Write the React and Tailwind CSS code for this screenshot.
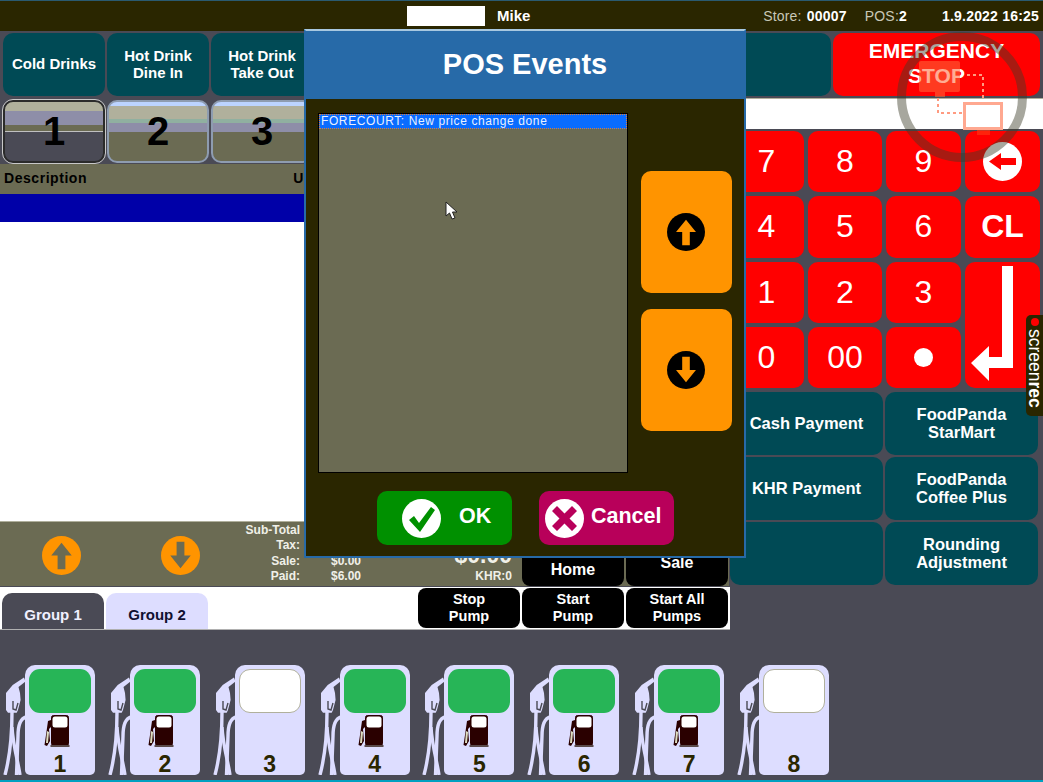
import React from "react";

const teal = "bg-[#004a55] text-white font-bold flex items-center justify-center text-center rounded-[10px]";
const topBtn = `${teal} w-[102px] h-[63px] text-[15px] leading-[17px] pb-[2px]`;
const payBtn = `${teal} text-[16.5px] leading-[18px] pb-[2px]`;

function Arrow({ dir = "up", size = 38, circle = "#000", arrow = "#ff9400" }) {
  const d =
    dir === "up"
      ? "M20 7 L30.5 20 L24 20 L24 34 L16 34 L16 20 L9.5 20 Z"
      : "M20 33 L30.5 20 L24 20 L24 6 L16 6 L16 20 L9.5 20 Z";
  return (
    <svg width={size} height={size} viewBox="0 0 40 40">
      <circle cx="20" cy="20" r="20" fill={circle} />
      <path d={d} fill={arrow} />
    </svg>
  );
}

function Tile({ n, active }) {
  return (
    <div
      className={`w-[102px] h-[63px] rounded-[10px] border-2 flex items-center justify-center overflow-hidden text-black font-bold text-[40px] leading-none pb-[2px] ${
        active
          ? "border-[#2b2b2b] outline outline-1 outline-[#c8c8c8] bg-[linear-gradient(#b0b09c_0,#b0b09c_9px,#8e8ea8_9px,#8e8ea8_23px,#6b6b53_23px,#6b6b53_29px,#c0c0c0_29px,#c0c0c0_30px,#4a4a55_30px)]"
          : "border-[#8e9cb0] bg-[linear-gradient(#bcd4ff_0,#bcd4ff_4px,#b0b09c_4px,#b0b09c_17px,#90b0a0_17px,#90b0a0_21px,#8e8ea8_21px,#8e8ea8_30px,#6b6b53_30px)]"
      }`}
    >
      {n}
    </div>
  );
}

function Pump({ n, on }) {
  return (
    <div className="relative w-[104.85px] shrink-0 h-[145px] flex justify-end pr-[9.85px] items-end">
      <svg className="absolute left-[3px] top-[46px]" width="24" height="99" viewBox="0 0 24 99">
        <path d="M21 1.5 L22.5 5.5 L15.5 11 L17 17 L17.6 24 L15 34 L13.7 36.7 L5 36.7 L3 34 L3 17 L9.7 9 Z" fill="#ddddff" />
        <path d="M10 25 L10 33 L13 34 L15 27" fill="none" stroke="#4a4a55" strokeWidth="1.4" />
        <path d="M9 36 C9 60 7 80 2 99" fill="none" stroke="#ddddff" strokeWidth="3.4" />
        <path d="M23 41 C16 43 15 52 15 60 L13.5 99" fill="none" stroke="#ddddff" strokeWidth="3.4" />
        <path d="M9 51 C10 70 15 85 17 99" fill="none" stroke="#ddddff" strokeWidth="3.4" />
      </svg>
      <div className="w-[70px] h-[110px] bg-[#ddddff] rounded-t-[10px] rounded-b-[5px] flex flex-col items-center pt-[4px]">
        <div className={`w-[62px] h-[44px] rounded-[11px] shrink-0 ${on ? "bg-[#27b557]" : "bg-white border border-[#b0b09c]"}`} />
        <div className="h-[34px] mt-[2px] w-[26px] mr-[7px] shrink-0">
          {on && (
            <svg width="26" height="33" viewBox="0 0 26 33">
              <rect x="7.5" y="0.5" width="17" height="30" rx="2" fill="#2a0000" stroke="#2a0000" />
              <rect x="8.5" y="1.5" width="15" height="11" rx="2.5" fill="#fff" />
              <rect x="6.5" y="30" width="19" height="2" fill="#5a4a4a" />
              <path d="M4 6 L7 5 L7 12 L5 14 L6 26 L3 31 L0.5 30 L2 20 L3 13 Z" fill="#2a0000" />
              <path d="M3 16 L5 17 L4 28 L2 28 Z" fill="#ddddc0" />
            </svg>
          )}
        </div>
        <div className="mt-[2px] text-[#2a2600] font-bold text-[23px] leading-[26px]">{n}</div>
      </div>
    </div>
  );
}

function Keypad() {
  const cell = "bg-[#ff0000] text-white flex items-center justify-center rounded-[10px] text-[32px] leading-none";
  return (
    <div className="grid grid-cols-[75px_74px_75px_75px] grid-rows-[61px_62px_61px_61px] gap-x-[4px] gap-y-[4px] mt-[2px]">
      {["7", "8", "9"].map((k) => <div key={k} className={`${cell} pb-[2px]`}>{k}</div>)}
      <div className={cell}>
        <svg width="39" height="39" viewBox="0 0 39 39">
          <circle cx="19.5" cy="19.5" r="19.5" fill="#fff" />
          <path d="M6 19.5 L18 11 L18 16 L33 16 L33 23 L18 23 L18 28 Z" fill="#ff0000" />
        </svg>
      </div>
      {["4", "5", "6"].map((k) => <div key={k} className={`${cell} pb-[2px]`}>{k}</div>)}
      <div className={`${cell} font-bold text-[32px] pb-[2px]`}>CL</div>
      {["1", "2", "3"].map((k) => <div key={k} className={`${cell} pb-[2px]`}>{k}</div>)}
      <div className="row-span-2 bg-[#ff0000] rounded-[10px] pl-[6px] pt-[4px]">
        <svg width="42" height="115" viewBox="0 0 42 115">
          <path d="M31 0 L42 0 L42 102 L18 102 L18 115 L0 97 L18 80 L18 91 L31 91 Z" fill="#fff" />
        </svg>
      </div>
      <div className={`${cell} pb-[2px]`}>0</div>
      <div className={`${cell} pb-[2px]`}>00</div>
      <div className={cell}>
        <div className="w-[19px] h-[19px] rounded-full bg-white" />
      </div>
    </div>
  );
}

export default function App() {
  return (
    <div className="relative w-[1043px] h-[782px] overflow-hidden bg-[#4a4a55] font-['Liberation_Sans',Arial,sans-serif] flex flex-col">
      {/* top bar */}
      <div className="h-[31px] shrink-0 bg-[#2a2600] border-t border-[#2a5a70] flex items-center text-white">
        <div className="ml-[407px] w-[78px] h-[20px] bg-white" />
        <div className="ml-[12px] font-bold text-[15px]">Mike</div>
        <div className="ml-auto flex items-center text-[14px] tracking-[0.2px] mr-[4px]">
          <span className="text-[#c8c8b8] mr-[1px]">Store:&nbsp;</span>
          <b className="mr-[18px]">00007</b>
          <span className="text-[#c8c8b8]">POS:</span>
          <b className="mr-[35px]">2</b>
          <b>1.9.2022 16:25</b>
        </div>
      </div>

      {/* body */}
      <div className="flex h-[599px] shrink-0">
        {/* left */}
        <div className="w-[729px] shrink-0 flex flex-col">
          <div className="flex gap-[2px] pl-[3px] pt-[2px] h-[69px]">
            <div className={topBtn}>Cold Drinks</div>
            <div className={topBtn}>Hot Drink<br />Dine In</div>
            <div className={topBtn}>Hot Drink<br />Take Out</div>
          </div>
          <div className="flex gap-[2px] pl-[3px] h-[64px]">
            <Tile n="1" active />
            <Tile n="2" />
            <Tile n="3" />
          </div>
          <div className="h-[30px] bg-[#6b6b53] flex items-center justify-between pl-[4px] pb-[2px] text-black font-bold text-[14px] tracking-[0.55px] pr-[425px]">
            <span>Description</span>
            <span>U</span>
          </div>
          <div className="h-[28px] bg-[#0000a8]" />
          <div className="h-[299px] bg-white" />
          {/* summary */}
          <div className="h-[65px] bg-[#6b6b53] border-t border-[#b0b09c] flex">
            <div className="w-[520px] flex">
              <div className="w-[122px] flex justify-center pt-[14px]"><Arrow dir="up" size={39} circle="#ff9400" arrow="#6b6b53" /></div>
              <div className="w-[117px] flex justify-center pt-[14px]"><Arrow dir="down" size={39} circle="#ff9400" arrow="#6b6b53" /></div>
              <div className="w-[61px] text-right text-[#f0f0e8] font-bold text-[12px] leading-[15.3px] pt-[1px]">
                <div>Sub-Total</div>
                <div>Tax:</div>
                <div>Sale:</div>
                <div>Paid:</div>
              </div>
              <div className="w-[61px] text-right text-[#f0f0e8] font-bold text-[12px] leading-[15.3px] pt-[1px]">
                <div className="h-[30.6px]" />
                <div>$0.00</div>
                <div>$6.00</div>
              </div>
              <div className="w-[151px] text-right text-[#f0f0e8] font-bold">
                <div className="text-[23px] leading-[24px] pt-[21px]">$0.00</div>
                <div className="text-[12px] leading-[14px] mt-[2px]">KHR:0</div>
              </div>
            </div>
            <div className="flex gap-[2px] ml-[2px] items-end">
              <div className="w-[102px] h-[63px] bg-black text-white font-bold text-[16px] rounded-[8px] flex items-end justify-center pb-[7px] leading-[18px]">Home</div>
              <div className="w-[102px] h-[63px] bg-black text-white font-bold text-[16px] rounded-[8px] flex items-end justify-center pb-[14px] leading-[18px]">Sale</div>
            </div>
          </div>
          {/* tabs */}
          <div className="h-[43px] mt-[1px] mr-[-1px] bg-white border-b border-[#b0b0b0] flex items-end">
            <div className="ml-[2px] w-[102px] h-[36px] bg-[#4a4a55] rounded-t-[10px] text-[#f0f0ff] font-bold text-[15px] flex items-center justify-center pt-[8px]">Group 1</div>
            <div className="ml-[2px] w-[102px] h-[36px] bg-[#ddddff] rounded-t-[10px] text-[#101030] font-bold text-[15px] flex items-center justify-center pt-[8px]">Group 2</div>
            <div className="ml-auto mr-[2px] mb-[1px] flex gap-[2px] self-end">
              {[["Stop", "Pump"], ["Start", "Pump"], ["Start All", "Pumps"]].map((l) => (
                <div key={l.join()} className="w-[102px] h-[40px] bg-black text-white font-bold text-[14.5px] leading-[17.5px] rounded-[8px] flex items-center justify-center text-center">
                  {l[0]}<br />{l[1]}
                </div>
              ))}
            </div>
          </div>
        </div>
        {/* right */}
        <div className="flex-1 flex flex-col">
          <div className="flex pt-[2px] gap-[2px] h-[67px]">
            <div className="w-[102px] h-[63px] bg-[#004a55] rounded-[10px]" />
            <div className="w-[207px] h-[63px] bg-[#ff0000] text-white font-bold text-[21px] leading-[25px] rounded-[10px] flex items-center justify-center text-center pb-[4px]">EMERGENCY<br />STOP</div>
          </div>
          <div className="h-[31px] bg-white border-t border-[#b0b09c]" />
          <Keypad />
          <div className="grid grid-cols-[153px_153px] grid-rows-[63px_63px_63px] gap-x-[2px] gap-y-[2px] mt-[4px] ml-[1px]">
            <div className={payBtn}>Cash Payment</div>
            <div className={payBtn}>FoodPanda<br />StarMart</div>
            <div className={payBtn}>KHR Payment</div>
            <div className={payBtn}>FoodPanda<br />Coffee Plus</div>
            <div className={payBtn} />
            <div className={payBtn}>Rounding<br />Adjustment</div>
          </div>
        </div>
      </div>

      {/* pumps */}
      <div className="flex h-[150px] shrink-0">
        {[1, 2, 3, 4, 5, 6, 7, 8].map((n) => (
          <Pump key={n} n={n} on={n !== 3 && n !== 8} />
        ))}
      </div>
      <div className="absolute left-0 right-0 bottom-0 h-[2px] bg-[#00a0c0]" />

      {/* modal */}
      <div className="absolute left-[304px] top-[29px] w-[442px] h-[529px] bg-[#2a2600] border-2 border-[#276aa8] border-t-[#a8c8e0] flex flex-col">
        <div className="h-[68px] shrink-0 bg-[#276aa8] text-white font-bold text-[29px] flex items-center justify-center pb-[1px]">POS Events</div>
        <div className="flex-1 flex pt-[14px] pl-[12px] relative">
          <div className="w-[310px] h-[360px] bg-[#6b6b53] border border-black">
            <div className="h-[15px] bg-[#0a6cff] outline-dotted outline-1 outline-[#e08030] -outline-offset-1 text-[#e8f0ff] text-[12px] leading-[15px] pl-[2px] tracking-[0.6px] whitespace-nowrap">FORECOURT: New price change done</div>
          </div>
          <div className="ml-[13px] mt-[58px] flex flex-col gap-[16px]">
            <div className="w-[91px] h-[122px] bg-[#ff9400] rounded-[10px] flex items-center justify-center pr-[1px]"><Arrow dir="up" /></div>
            <div className="w-[91px] h-[122px] bg-[#ff9400] rounded-[10px] flex items-center justify-center pr-[1px]"><Arrow dir="down" /></div>
          </div>
          <div className="absolute left-[71px] top-[392px] flex gap-[27px]">
            <div className="w-[135px] h-[54px] bg-[#009000] rounded-[10px] flex items-center text-white font-bold text-[21.5px] pl-[25px] gap-[18px]">
              <svg width="39" height="39" viewBox="0 0 39 39" className="shrink-0">
                <circle cx="19.5" cy="19.5" r="19.5" fill="#fff" />
                <path d="M7 21 L12 17 L17 24 L29 8 L33 11 L18 33 Z" fill="#009000" />
              </svg>
              <span className="pb-[4px]">OK</span>
            </div>
            <div className="w-[135px] h-[54px] bg-[#b8005a] rounded-[10px] flex items-center text-white font-bold text-[21.5px] pl-[6px] gap-[7px]">
              <svg width="39" height="39" viewBox="0 0 39 39" className="shrink-0">
                <circle cx="19.5" cy="19.5" r="19.5" fill="#fff" />
                <path d="M12 7 L19.5 14.5 L27 7 L32 12 L24.5 19.5 L32 27 L27 32 L19.5 24.5 L12 32 L7 27 L14.5 19.5 L7 12 Z" fill="#b8005a" />
              </svg>
              <span className="pb-[4px]">Cancel</span>
            </div>
          </div>
          <svg className="absolute left-[139px] top-[102px]" width="14" height="20" viewBox="0 0 14 20">
            <path d="M1 1 L1 15 L4.5 12 L7 18 L10 17 L7.5 11 L12 11 Z" fill="#fff" stroke="#222" strokeWidth="1" />
          </svg>
        </div>
      </div>

      {/* recorder overlay */}
      <svg className="absolute left-[890px] top-[25px] pointer-events-none" width="144" height="144" viewBox="0 0 144 144">
        <circle cx="72" cy="72" r="60.5" fill="none" stroke="#3c3c28" strokeOpacity="0.45" strokeWidth="9" />
        <rect x="29" y="36" width="41" height="31" rx="2" fill="#ff6a3a" fillOpacity="0.55" />
        <rect x="45" y="67" width="10" height="5" fill="#ff6a3a" fillOpacity="0.55" />
        <path d="M48 73 L48 88 L72 88 M77 50 L93 50 L93 75" fill="none" stroke="#ff9a80" strokeWidth="2" strokeDasharray="3 3" />
        <rect x="74.5" y="78.5" width="37" height="25" fill="#fff" stroke="#ffa890" strokeWidth="3" />
        <rect x="87" y="105" width="13" height="5" fill="#ff3010" fillOpacity="0.7" />
      </svg>
      <div className="absolute right-0 top-[315px] w-[17px] h-[101px] bg-[#2a2600] rounded-l-[5px] flex flex-col items-center pt-[3px]">
        <div className="w-[8px] h-[8px] rounded-full bg-[#ff0000] shrink-0" />
        <div className="[writing-mode:vertical-rl] text-white text-[17.5px] leading-[16px] mt-[3px]">screen<b>rec</b></div>
      </div>
    </div>
  );
}
